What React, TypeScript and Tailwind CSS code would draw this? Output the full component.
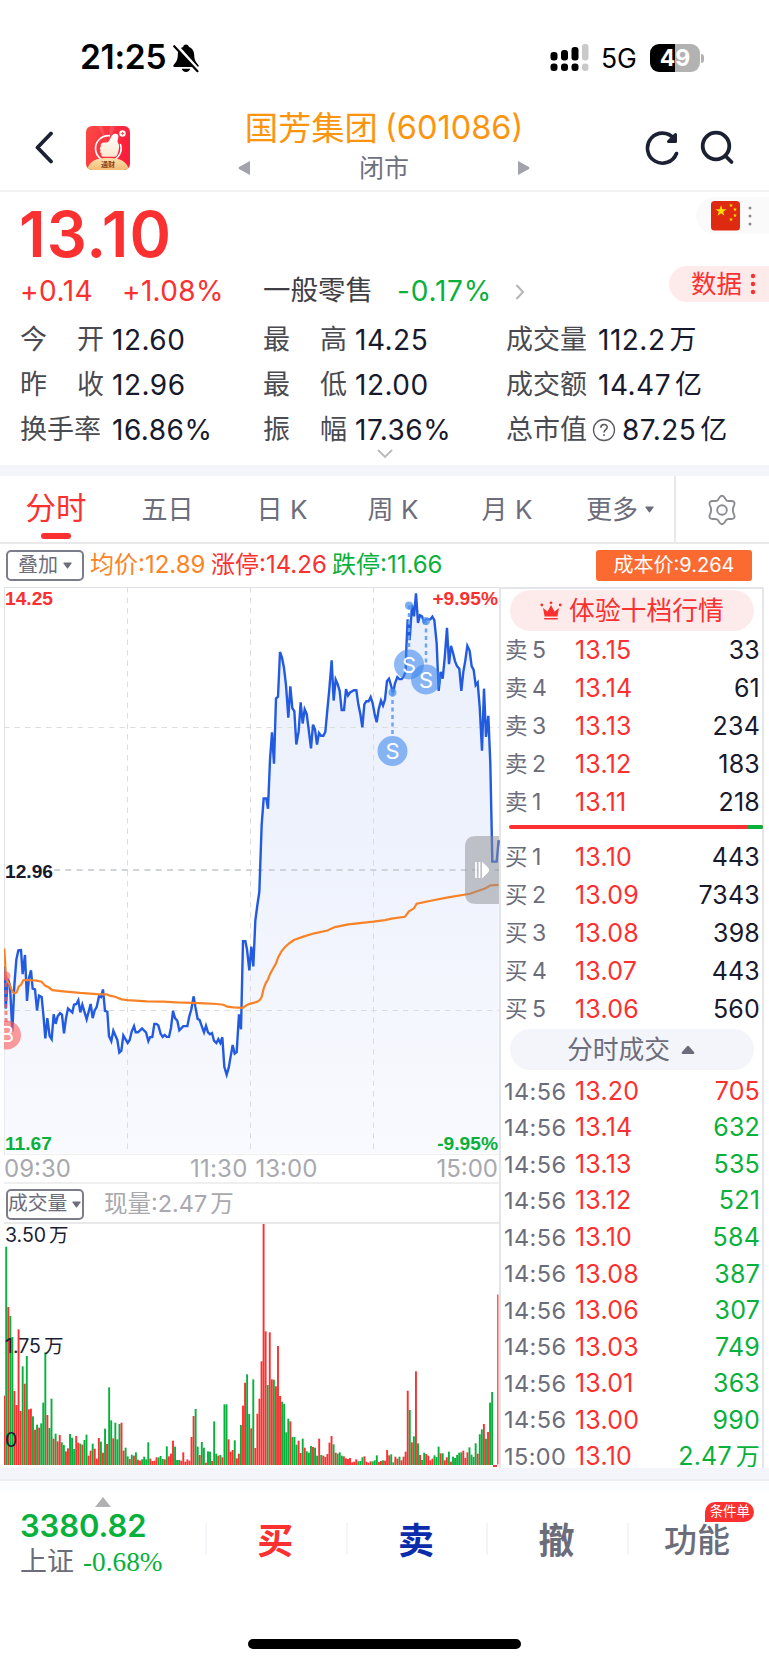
import clsx from 'clsx';

const RED = '#fb3030';
const GREEN = '#08b03c';

// one entry per minute: direction + top of the bar
const VOLUME =
  'r770 g323 r504 g531 g594 r756 r798 r571 r816 g682 r734 g651 r811 r809 g832 r872 g857 r866 g853 g791 g640 r828 g867 g779 r899 g884 r907 r888 g910 g918 r937 r928 g885 g896 g930 r891 r911 g914 r917 g903 g887 r950 r935 g914 r929 r959 r897 g908 r941 g869 r915 g745 g844 r898 g851 g901 g855 r851 r935 g926 g952 r960 g947 r950 g940 r962 r965 g961 g953 g961 g910 r959 r966 r965 r955 g955 g951 g960 r961 g922 r952 r944 r905 g923 g963 g963 r965 r940 r968 r961 r965 r894 r831 g810 g923 r948 g909 g926 r971 g937 g938 r966 g847 g944 r950 g948 r955 g796 g796 r901 r938 r933 g904 r958 r944 g858 r800 r731 g706 g825 r868 g721 r927 r824 r779 r667 r252 r577 g738 r580 r721 g722 r742 r621 r771 g788 g795 g880 g839 r847 g894 g894 g917 r905 r942 g899 r926 g937 g941 g921 r924 g926 g950 r899 g948 r950 r954 r945 r911 r891 g916 r941 g944 g940 g950 r952 r958 r960 r957 r970 r968 r961 g967 g966 g955 r952 r968 r971 r967 g967 g964 g949 r969 r966 g964 r965 r933 r949 g946 g970 r953 r959 g953 r964 r953 r938 r755 g813 r910 g892 r697 g913 r948 g963 g941 r945 r950 r964 r959 g949 g954 g923 r943 g943 r964 r955 g938 r968 g953 g957 g948 g941 g940 r935 r957 r940 g925 g947 g954 g913 r944 g886 g871 r855 g899 r879 g791 g759';

const PRICE =
  '14,1010 17,1120 24,1042 30,1060 37,1180 43,1060 49,992 55,968 63,967 68,1030 75,980 81,1100 87,1040 93,1020 98,1068 105,1070 111,1125 117,1086 125,1090 130,1135 136,1198 142,1145 149,1192 155,1200 161,1135 167,1160 173,1140 180,1132 186,1136 192,1185 198,1145 204,1120 217,1130 222,1110 229,1108 235,1098 241,1130 247,1110 260,1148 272,1108 278,1145 284,1125 290,1116 297,1088 303,1090 309,1070 315,1126 322,1128 327,1192 334,1205 340,1178 352,1202 358,1235 364,1230 370,1190 383,1210 389,1202 395,1180 402,1166 407,1182 414,1182 426,1172 438,1182 445,1205 450,1195 457,1194 463,1160 469,1160 475,1164 482,1186 488,1194 494,1189 500,1194 507,1194 513,1170 519,1126 525,1145 532,1152 538,1177 550,1166 562,1166 568,1140 574,1122 581,1088 586,1115 593,1147 599,1150 605,1165 612,1182 618,1165 624,1182 630,1187 636,1184 642,1204 649,1210 655,1200 661,1210 667,1195 673,1272 680,1293 686,1275 692,1245 698,1215 704,1238 710,1234 717,1135 723,1174 729,944 736,944 741,965 748,1020 754,958 760,1010 766,890 772,850 778,815 785,640 791,571 799,571 804,598 810,470 816,398 822,480 828,310 834,305 840,188 846,203 852,230 858,275 865,360 871,278 877,335 883,343 889,430 896,395 902,320 908,375 914,338 920,350 926,390 933,440 939,378 945,390 951,430 957,400 963,407 970,407 976,397 982,340 988,285 995,210 1001,315 1007,260 1013,272 1019,290 1025,340 1032,340 1038,285 1044,302 1050,294 1062,288 1069,288 1075,325 1081,350 1087,385 1093,325 1099,317 1106,317 1112,306 1118,322 1124,350 1130,372 1136,338 1143,315 1149,328 1155,312 1161,264 1167,258 1173,275 1179,297 1185,270 1192,254 1198,259 1205,259 1211,252 1217,240 1219,180 1223,103 1229,157 1236,65 1242,95 1248,35 1254,112 1260,92 1266,95 1272,110 1278,103 1285,103 1291,103 1297,96 1303,105 1310,165 1316,290 1322,240 1328,258 1334,205 1341,125 1347,220 1353,172 1359,190 1365,212 1371,225 1378,232 1384,290 1390,240 1396,210 1402,172 1409,185 1415,225 1421,235 1427,275 1433,268 1439,330 1446,446 1452,284 1458,410 1465,355 1471,480 1477,736 1490,736 1496,680';

const AVERAGE =
  '13,963 18,1040 24,1050 30,1060 37,1075 43,1080 50,1078 56,1063 63,1058 70,1046 80,1045 95,1046 110,1047 125,1050 135,1060 147,1065 157,1072 190,1075 240,1079 290,1082 320,1083 332,1087 345,1089 365,1096 383,1098 440,1101 490,1102 530,1104 600,1106 650,1108 670,1110 682,1115 700,1117 728,1118 735,1114 745,1109 760,1105 772,1102 778,1099 785,1090 791,1068 798,1052 804,1044 810,1030 820,1014 828,1002 835,985 845,970 855,959 870,948 882,941 910,932 940,924 982,916 1005,907 1045,900 1120,893 1155,889 1175,885 1215,880 1227,866 1242,858 1250,846 1300,837 1340,830 1410,820 1455,806 1472,798 1496,797';

const stats = [
  [
    ['今', '开', '12.60'],
    ['最', '高', '14.25'],
    ['成交量', '', '112.2', '万'],
  ],
  [
    ['昨', '收', '12.96'],
    ['最', '低', '12.00'],
    ['成交额', '', '14.47', '亿'],
  ],
  [
    ['换手率', '', '16.86%'],
    ['振', '幅', '17.36%'],
    ['总市值', '', '87.25', '亿'],
  ],
];

const asks = [
  ['卖', '5', '13.15', '33'],
  ['卖', '4', '13.14', '61'],
  ['卖', '3', '13.13', '234'],
  ['卖', '2', '13.12', '183'],
  ['卖', '1', '13.11', '218'],
];

const bids = [
  ['买', '1', '13.10', '443'],
  ['买', '2', '13.09', '7343'],
  ['买', '3', '13.08', '398'],
  ['买', '4', '13.07', '443'],
  ['买', '5', '13.06', '560'],
];

const trades = [
  ['14:56', '13.20', '705'],
  ['14:56', '13.14', '632'],
  ['14:56', '13.13', '535'],
  ['14:56', '13.12', '521'],
  ['14:56', '13.10', '584'],
  ['14:56', '13.08', '387'],
  ['14:56', '13.06', '307'],
  ['14:56', '13.03', '749'],
  ['14:56', '13.01', '363'],
  ['14:56', '13.00', '990'],
  ['15:00', '13.10', '2.47', '万'],
];

const Caret = ({ className }: { className?: string }) => (
  <svg className={className} width="9" height="7" viewBox="0 0 9 7">
    <path d="M1 .5h7q1 0 .5 1L5 6.3q-.5.5-1 0L.5 1.500Q0 .5 1 .5Z" fill="currentColor" />
  </svg>
);

const StatusBar = () => (
  <div className="flex h-[98px] items-center justify-between pl-[80px] pr-[65px] pt-[18px] text-black">
    <div className="flex items-center">
      <span className="w-[92px] text-[33.500px] font-semibold leading-none tracking-[-0.300px]">21:25</span>
      <svg width="28" height="30" viewBox="0 0 28 30" fill="#000">
        <path d="M14 1.500c-1.600 0-2.700 1-2.900 2.400C7.300 5.200 5.900 8.400 5.800 12c-.1 5-1.600 7.200-4 9.700-1 1.200-.5 2.300.8 2.300h22.800c1.300 0 1.800-1.100.8-2.300-2.400-2.500-3.900-4.700-4-9.700-.1-3.600-1.500-6.800-5.300-8.100C16.700 2.500 15.600 1.500 14 1.500Z" />
        <path d="M9.800 25.800h8.400c-.4 2-2 3.200-4.200 3.200s-3.800-1.200-4.200-3.200Z" />
        <path d="M3.700 2.200 27 28.200" stroke="#fff" strokeWidth="4" />
        <path d="M2.200 3.200 25.500 28.200" stroke="#000" strokeWidth="2.200" strokeLinecap="round" />
      </svg>
    </div>
    <div className="flex items-center">
      <svg width="39" height="28" viewBox="0 0 39 28">
        <rect x="0.500" y="8" width="7" height="8.500" rx="3" />
        <rect x="11" y="6" width="7" height="10.500" rx="3" />
        <rect x="21.500" y="3" width="7" height="13.500" rx="3" />
        <rect x="32" y="0" width="6.500" height="16.500" rx="3" fill="#c9c9c9" />
        <rect x="0.500" y="19.500" width="7" height="7.500" rx="3" />
        <rect x="11" y="19.500" width="7" height="7.500" rx="3" />
        <rect x="21.500" y="19.500" width="7" height="7.500" rx="3" />
        <rect x="32" y="19.500" width="6.500" height="7.500" rx="3" fill="#c9c9c9" />
      </svg>
      <span className="ml-3 w-[37px] text-[26.500px] leading-none tracking-[-0.200px]">5G</span>
      <div className="ml-3 flex h-[28px] w-[50px] items-center justify-center rounded-[9px] bg-[linear-gradient(90deg,#000_50%,#b2b2b2_50%)] text-[23px] font-bold leading-none text-white">
        49
      </div>
      <div className="ml-[1px] h-[9px] w-[3px] rounded-r-full bg-[#b2b2b2]" />
    </div>
  </div>
);

const AppIcon = () => (
  <svg width="44" height="44" viewBox="0 0 44 44">
    <defs>
      <linearGradient id="app-bg" x1="0" y1="0" x2="1" y2="0.300">
        <stop offset="0" stopColor="#fb4a45" />
        <stop offset="1" stopColor="#fa1e3c" />
      </linearGradient>
      <linearGradient id="app-gold" x1="0" y1="0" x2="0" y2="1">
        <stop offset="0" stopColor="#fbe0ad" />
        <stop offset="1" stopColor="#f3bd75" />
      </linearGradient>
      <linearGradient id="app-hand" x1="0" y1="0" x2="0" y2="1">
        <stop offset="0" stopColor="#fff" />
        <stop offset="1" stopColor="#ffe6cf" />
      </linearGradient>
      <clipPath id="app-clip">
        <rect width="44" height="44" rx="6" />
      </clipPath>
    </defs>
    <g clipPath="url(#app-clip)">
      <rect width="44" height="44" fill="url(#app-bg)" />
      <path d="M22 20 12 0h4Zm0 0L24 0h5Z" fill="#fff" opacity=".12" />
      <path d="M24 9.800A12.800 12.800 0 1 0 34.300 18" stroke="#fff" strokeWidth="1.600" fill="none" />
      <path
        d="M26.500 9c1.800-2 5.700-1.700 5.900 1.200.1 2-1 3.600-.9 5.300.2 1.600 1.700 2.600 1.600 5.200-.1 2.300-.6 4.500-1.500 7.300-.6 2-2 2.800-4 2.800H18c-2.500 0-3.300-1.800-2.500-3-1.600-1-1.700-2.600-.8-3.600-1.200-1.200-1-3 .2-3.800-.7-2.400.9-4.200 3.200-4h3.200c2.700-1.600 3.200-5.200 5.200-7.400Z"
        fill="url(#app-hand)"
      />
      <circle cx="36.500" cy="7.500" r="3.200" fill="#fff" />
      <path d="M36.500 5.800v3.400M34.800 7.500h3.400" stroke="#fb3b42" strokeWidth=".8" />
      <path d="M1 44c2-7 6-12 21-12s19 5 21 12Z" fill="url(#app-gold)" />
      <text x="22" y="41" textAnchor="middle" fontSize="7" fontWeight="700" fill="#8a431c" fontFamily="Noto Sans CJK SC">
        通财
      </text>
    </g>
  </svg>
);

const Header = () => (
  <header className="flex h-[94px] justify-between border-b-2 border-[#f3f3f4]">
    <div className="flex w-[238px] items-start pl-[34px] pt-[28px]">
      <svg className="mt-[5px]" width="20" height="33" viewBox="0 0 20 33" fill="none">
        <path d="M17 2.500 3.500 16.500 17 30.500" stroke="#1b2033" strokeWidth="3.800" strokeLinecap="round" strokeLinejoin="round" />
      </svg>
      <div className="ml-[32px]">
        <AppIcon />
      </div>
    </div>
    <div className="flex w-[292px] flex-col items-center pt-[10px]">
      <div className="flex items-center whitespace-nowrap text-[#fb950f]">
        <span className="text-[33.300px] leading-[40px]">国芳集团</span>
        <span className="ml-[7px] text-[32.500px] leading-[40px]">(601086)</span>
      </div>
      <div className="flex w-full items-center justify-between pt-[1px] text-[#a2a3ad]">
        <svg width="12" height="14" viewBox="0 0 12 14">
          <path d="M12 0v14L1 8q-1-1 0-2Z" fill="currentColor" />
        </svg>
        <span className="text-[25px] leading-[38px] text-[#6f7080]">闭市</span>
        <svg width="12" height="14" viewBox="0 0 12 14">
          <path d="M0 0v14l11-6q1-1 0-2Z" fill="currentColor" />
        </svg>
      </div>
    </div>
    <div className="flex w-[239px] items-start justify-end pr-[33px] pt-[32px]">
      <svg width="36" height="36" viewBox="0 0 36 36" fill="none" stroke="#1b2033" strokeWidth="3.600" strokeLinecap="round" strokeLinejoin="round">
        <path d="M32.500 23.500A15 15 0 1 1 30 8.500" />
        <path d="M31.500 4.500v7H24.500Z" fill="#1b2033" strokeWidth="3" />
      </svg>
      <svg className="ml-5" width="36" height="36" viewBox="0 0 36 36" fill="none" stroke="#1b2033" strokeWidth="3.800" strokeLinecap="round">
        <circle cx="16" cy="16" r="13.300" />
        <path d="m26 26.500 5.500 5.500" />
      </svg>
    </div>
  </header>
);

const star = 'M0-5 1.180-1.620 4.750-1.540 1.900.62 2.940 4.050 0 2 -2.940 4.050-1.900.62-4.750-1.540-1.180-1.620Z';

const Quote = () => (
  <section className="h-[273px]">
    <div className="flex h-[78px] items-start justify-between">
      <div className="pl-[19px] pt-[10px] text-[63px] font-semibold leading-[64px] tracking-[1px] text-[#fb3030]">13.10</div>
      <div className="mt-[5px] flex h-[37px] w-[73px] items-center rounded-l-full bg-[#fafafa] pl-[15px]">
        <svg width="29" height="30" viewBox="0 0 29 30" fill="#fede00">
          <rect width="29" height="29.500" rx="3.500" fill="#de2a10" />
          <path transform="translate(10 10) scale(1.150)" d={star} />
          <path transform="translate(20 4.500) scale(.42)" d={star} />
          <path transform="translate(24 8.500) scale(.42)" d={star} />
          <path transform="translate(24 14.500) scale(.42)" d={star} />
          <path transform="translate(20 18.500) scale(.42)" d={star} />
        </svg>
        <svg className="ml-[8px]" width="4" height="22" fill="#8c8c8c">
          <circle cx="2" cy="3" r="1.500" />
          <circle cx="2" cy="11" r="1.500" />
          <circle cx="2" cy="19" r="1.500" />
        </svg>
      </div>
    </div>

    <div className="flex h-[47px] items-center whitespace-nowrap pb-[5px] pl-[20px] text-[28px] leading-none text-[#fb3030]">
      <span className="flex items-center">
        <span className="w-[102px] tracking-[0.500px]">+0.14</span>
        <span className="w-[141px] tracking-[0.350px]">+1.08%</span>
        <span className="w-[134px] text-[27.500px] text-[#3f4046]">一般零售</span>
        <span className="w-[118px] tracking-[0.800px] text-[#08b03c]">-0.17%</span>
        <svg className="mt-[2px]" width="10" height="16" viewBox="0 0 10 16" fill="none" stroke="#b5b5b8" strokeWidth="2">
          <path d="m1.500 1 6.500 7-6.500 7" />
        </svg>
      </span>
      <div className="mb-[15px] ml-auto flex h-[36px] w-[100px] items-center rounded-l-full bg-[#fdeaea] pl-[22px] text-[25.500px]">
        数据
        <svg className="ml-[8px]" width="6" height="22" fill="#fb3030">
          <circle cx="3" cy="3" r="2.200" />
          <circle cx="3" cy="11" r="2.200" />
          <circle cx="3" cy="19" r="2.200" />
        </svg>
      </div>
    </div>

    <div className="flex flex-col pl-[20px]">
      {stats.map((row, r) => (
        <div key={r} className="flex h-[45px]">
          {row.map(([label, tail, value, unit]) => (
            <div key={label + tail} className="flex w-[243px] items-center whitespace-nowrap text-[27px] leading-none text-[#17192c]">
              <span className="flex w-[84px] justify-between text-[#4a4b50]">
                <span>{label}</span>
                {tail && <span>{tail}</span>}
              </span>
              {label === '总市值' && (
                <svg className="ml-[2px] mr-[-2px]" width="24" height="24" viewBox="0 0 24 24" fill="none" stroke="#5a5b60" strokeWidth="1.300">
                  <circle cx="12" cy="12" r="10.500" />
                  <path d="M8.800 9.800c0-4.300 6.400-4.300 6.400-.6 0 2.400-3.200 2.500-3.200 5.300M12 16.300v1.700" strokeWidth="1.600" />
                </svg>
              )}
              <span className="ml-[8px] text-[28px] tracking-[0.500px]">{value}</span>
              {unit && <span className="ml-[4px]">{unit}</span>}
            </div>
          ))}
        </div>
      ))}
    </div>
    <svg className="mx-auto mt-[-3px]" width="16" height="10" viewBox="0 0 16 10" fill="none" stroke="#b9b9bd" strokeWidth="1.800">
      <path d="m1 1 7 7 7-7" />
    </svg>
  </section>
);

const Tabs = () => (
  <nav className="flex h-[68px] border-b-2 border-[#e9e9ea] text-[26px] leading-none text-[#6c6d7b]">
    <div className="flex w-[112px] flex-col items-center pt-[17px] text-[30.500px] text-[#fb3030]">
      <span>分时</span>
      <span className="mt-[9px] h-[6px] w-[30px] rounded-full bg-[#fb3030]" />
    </div>
    <div className="flex flex-1 items-center pt-[1px]">
      <span className="w-[111px] text-center">五日</span>
      <span className="w-[118px] text-center">日 K</span>
      <span className="w-[104px] text-center">周 K</span>
      <span className="w-[124px] text-center">月 K</span>
      <span className="ml-[17px] flex items-center">
        更多
        <Caret className="ml-[7px]" />
      </span>
    </div>
    <div className="flex w-[95px] items-center justify-center border-l-2 border-[#e9e9ea] pr-[1px] pt-[1px]">
      <svg width="30" height="32" viewBox="0 0 30 32" fill="none" stroke="#8b8c92" strokeWidth="1.900" strokeLinejoin="round">
        <path d="M12.500 3.500q2.500-3.500 5 0l1.500 2.300q1 1.200 2.500 1.200h2.700q4.300 0 3 4l-1 2.600q-.6 2.400 0 4.800l1 2.600q1.300 4-3 4h-2.700q-1.500 0-2.500 1.200l-1.500 2.300q-2.500 3.500-5 0L11 26.200Q10 25 8.500 25H5.800q-4.300 0-3-4l1-2.600q.6-2.400 0-4.800l-1-2.600q-1.300-4 3-4h2.700Q10 7 11 5.800Z" />
        <circle cx="15" cy="16" r="4.800" />
      </svg>
    </div>
  </nav>
);

const Legend = () => (
  <div className="flex h-[43px] items-center whitespace-nowrap pb-[1px] pl-[6px] pr-[17px] text-[24px] leading-none">
    <div className="flex h-[31px] w-[78px] items-center justify-center rounded-[5px] border-2 border-[#7c7d8b] text-[20px] text-[#6c6d7b]">
      叠加
      <Caret className="ml-[5px]" />
    </div>
    <span className="ml-[6px] w-[121px] text-[#fb8425]">均价:12.89</span>
    <span className="w-[121px] text-[#fb3030]">涨停:14.26</span>
    <span className="text-[#08b03c]">跌停:11.66</span>
    <span className="ml-auto flex h-[31px] w-[156px] items-center justify-center rounded-[3px] bg-[#fb6a31] text-[20px] text-white">成本价:9.264</span>
  </div>
);

type MarkerProps = { x: number; y: number; dot: number };

const Marker = ({ x, y, dot }: MarkerProps) => (
  <g>
    <path d={`M${x} ${dot}V${y - 14}`} stroke="#6da5ef" strokeWidth="2.500" strokeDasharray="4 3.500" />
    <circle cx={x} cy={dot} r="4" fill="#4f94ee" fillOpacity=".75" />
    <circle cx={x} cy={y} r="15" fill="#3c86ec" fillOpacity=".58" />
    <text x={x} y={y + 8} textAnchor="middle" fontSize="22" fill="#fff">
      S
    </text>
  </g>
);

const PriceChart = () => (
  <div className="relative h-[567px]">
    <svg className="block" width="497" height="567" viewBox="4 587 497 567">
      <defs>
        <linearGradient id="area" x1="0" y1="0" x2="0" y2="1">
          <stop offset="0" stopColor="#eaf0fc" />
          <stop offset="0.500" stopColor="#eff3fd" />
          <stop offset="1" stopColor="#f9fafe" />
        </linearGradient>
      </defs>
      <g transform="translate(0 580) scale(.33333 .38265)">
        <path d={`M14,1498L${PRICE}L1496,1498Z`} fill="url(#area)" />
      </g>
      <g stroke="#dcdde0" strokeWidth="1" strokeDasharray="5.500 5">
        <path d="M127.500 587v566M250.500 587v566M373.500 587v566M4 727.500h495M4 1010.500h495" />
        <path d="M54 870h445" stroke="#d0d3d9" strokeWidth="2" strokeDasharray="6 5.300" />
      </g>
      <g transform="translate(0 580) scale(.33333 .38265)" fill="none" strokeLinejoin="miter">
        <polyline points={PRICE} stroke="#225ae0" strokeWidth="2.400" vectorEffect="non-scaling-stroke" />
        <polyline points={AVERAGE} stroke="#f98226" strokeWidth="2.200" vectorEffect="non-scaling-stroke" />
      </g>
      <Marker x={409} y={664.500} dot={605.500} />
      <Marker x={426} y={679.500} dot={621} />
      <Marker x={392.500} y={751} dot={692.500} />
      <path d="M6 976V1022" stroke="#fb5a5a" strokeOpacity=".7" strokeWidth="3" strokeDasharray="4 3" />
      <circle cx="6" cy="976" r="4.500" fill="#fb5a5a" fillOpacity=".6" />
      <circle cx="6.500" cy="1035" r="14.500" fill="#fb5a5a" fillOpacity=".6" />
      <text x="7" y="1042" textAnchor="middle" fontSize="21" fill="#fff">
        B
      </text>
      <path d="M499 836h-23q-11 0-11 11v46q0 11 11 11h23Z" fill="#8d8e93" fillOpacity=".5" />
      <path d="M476 862v16M479.500 862v16" stroke="#fff" strokeWidth="1.700" />
      <path d="M482 861.500v17l6.500-6.500q1.500-2 0-4Z" fill="#fff" />
    </svg>
    <div className="absolute inset-0 flex flex-col justify-between px-[1px] pb-[1px] pt-[3px] font-['Liberation_Sans'] text-[19.200px] font-bold leading-[18px]">
      <div className="flex justify-between text-[#fb3030]">
        <span>14.25</span>
        <span>+9.95%</span>
      </div>
      <div className="text-[#17192c]">12.96</div>
      <div className="flex justify-between text-[#08b03c]">
        <span>11.67</span>
        <span>-9.95%</span>
      </div>
    </div>
  </div>
);

const VolumeChart = () => (
  <div className="relative h-[245px] border-t-2 border-[#e9e9ea]">
    <svg className="block" width="497" height="244" viewBox="4 1225 497 244">
      {VOLUME.split(' ').map((bar, i) => {
        const top = 1140 + Number(bar.slice(1)) / 3;
        return <rect key={i} x={3.200 + i * 2.059} y={top} width="1.900" height={1466 - top} fill={bar[0] === 'r' ? RED : GREEN} />;
      })}
      <path d="M497.800 1295.500v170" stroke={RED} strokeWidth="1.200" />
      <path d="M493 1467h4" stroke={RED} strokeWidth="2" />
    </svg>
    <div className="absolute left-[1px] top-0 flex flex-col text-[19.500px] leading-[22px] text-[#1b1d33]">
      <span>
        3.50<span className="ml-[3px]">万</span>
      </span>
      <span className="mt-[89px]">
        1.75<span className="ml-[3px]">万</span>
      </span>
      <span className="mt-[72px]">0</span>
    </div>
  </div>
);

const OrderRow = ({ row }: { row: string[] }) => (
  <div className="flex h-[38px] items-center pl-[4px] pr-[2px] text-[25px] leading-none tracking-[0.200px]">
    <span className="w-[27px] text-[22.500px] text-[#6c6d7b]">{row[0]}</span>
    <span className="w-[43px] text-[23px] text-[#6c6d7b]">{row[1]}</span>
    <span className="text-[#fb3030]">{row[2]}</span>
    <span className="ml-auto text-[#17192c]">{row[3]}</span>
  </div>
);

const OrderBook = () => (
  <aside className="h-[881px] w-[263px] border-r-2 border-t-2 border-[#e4e5e9]">
    <div className="ml-[9px] mt-[1px] flex h-[41px] w-[244px] items-center justify-center rounded-full bg-[#fdebeb] text-[25.800px] leading-none text-[#fb3030]">
      <svg className="mr-[7px]" width="22" height="20" viewBox="0 0 22 20" fill="#fb3030">
        <path d="m3 7 4.500 3.500L11 4l3.500 6.500L19 7l-1.600 8.500H4.600Z" />
        <rect x="4" y="17" width="14" height="1.600" rx=".8" />
        <circle cx="1.800" cy="4" r="1.400" />
        <circle cx="11" cy="1.800" r="1.400" />
        <circle cx="20.200" cy="4" r="1.400" />
      </svg>
      体验十档行情
    </div>
    {asks.map(row => (
      <OrderRow key={row[1]} row={row} />
    ))}
    <div className="mb-[9px] ml-[8px] mt-[4px] flex h-[4px] w-[254px] overflow-hidden rounded-full bg-[#fb3030]">
      <span className="ml-auto w-[16px] rounded-l-full bg-[#08b03c]" />
    </div>
    {bids.map(row => (
      <OrderRow key={row[1]} row={row} />
    ))}
    <div className="mb-[3px] ml-[9px] mt-[1px] flex h-[41px] w-[244px] items-center justify-center rounded-full bg-[#f4f5fa] pr-[2px] text-[25.800px] leading-none text-[#6c6d7b]">
      分时成交
      <svg className="ml-[11px]" width="14" height="10" viewBox="0 0 14 10">
        <path d="M1 7 6 1.200q1-1 2 0L13 7q1 2-1 2H2Q0 9 1 7Z" fill="currentColor" />
      </svg>
    </div>
    {trades.map(([time, price, amount, unit], i) => (
      <div key={i} className="flex h-[36.550px] items-center pl-[3px] pr-[2px] text-[25px] leading-none tracking-[0.200px] text-[#fb3030]">
        <span className="w-[71px] text-[23.500px] tracking-[0.400px] text-[#6c6d7b]">{time}</span>
        <span>{price}</span>
        <span className={clsx('ml-auto', i > 0 && 'text-[#08b03c]')}>
          {amount}
          {unit && <span className="ml-[4px] text-[24px]">{unit}</span>}
        </span>
      </div>
    ))}
  </aside>
);

const BottomBar = () => (
  <footer className="flex h-[95px] whitespace-nowrap leading-none">
    <div className="w-[205px] pl-[20px]">
      <svg className="ml-[75px] mt-[5px]" width="16" height="10" viewBox="0 0 16 10">
        <path d="M8 0 16 10H0Z" fill="#b1b1b3" />
      </svg>
      <div className="mt-[2px] text-[31px] font-semibold leading-[34px] tracking-[-0.100px] text-[#08b03c]">3380.82</div>
      <div className="mt-[3px] flex items-center text-[27px] leading-[32px] text-[#6c6d7b]">
        上证
        <span className="ml-[9px] font-['Liberation_Serif'] text-[27.300px] text-[#08b03c]">-0.68%</span>
      </div>
    </div>
    {[
      ['买', 'text-[#fb3030] text-[36px] font-bold'],
      ['卖', 'text-[#0a2cab] text-[36px] font-bold'],
      ['撤', 'text-[#6c6d7b] text-[36px] font-bold'],
      ['功能', 'text-[#6c6d7b] text-[33px] font-medium'],
    ].map(([name, style]) => (
      <div key={name} className="relative flex h-[95px] w-[140.600px] items-center justify-center pt-[2px]">
        <span className="absolute left-0 top-[31px] h-[32px] w-[2px] bg-[#f4f5f9]" />
        <span className={style}>{name}</span>
        {name === '功能' && (
          <span className="absolute right-[13px] top-[10px] flex h-[20px] w-[49px] items-center justify-center rounded-[10px] rounded-bl-none bg-[#fb3030] text-[13.500px] text-white">
            条件单
          </span>
        )}
      </div>
    ))}
  </footer>
);

const App = () => (
  <div className="h-[1665px] w-[769px] overflow-hidden bg-white font-[Inter,'Noto_Sans_CJK_SC',sans-serif]">
    <StatusBar />
    <Header />
    <Quote />
    <div className="h-[11px] bg-[#f4f5fa]" />
    <Tabs />
    <Legend />
    <main className="flex h-[881px] pl-[4px]">
      <div className="w-[497px] border-r-2 border-[#e4e5e9]">
        <div className="h-[567px] shadow-[inset_1px_1px_0_#dfe3e8]">
          <PriceChart />
        </div>
        <div className="flex h-[30px] items-center border-b-2 border-t border-[#efeff0] pr-[1px] text-[24px] leading-none text-[#a8a8ae]">
          <span>09:30</span>
          <span className="ml-auto tracking-[0.200px]">11:30</span>
          <span className="ml-[8px] mr-auto">13:00</span>
          <span>15:00</span>
        </div>
        <div className="flex h-[38px] items-center pl-[2px] pt-[2px] leading-none">
          <div className="flex h-[31px] w-[78px] items-center whitespace-nowrap rounded-[5px] border-2 border-[#7c7d8b] text-[19.800px] text-[#6c6d7b]">
            成交量
            <Caret className="ml-[5px]" />
          </div>
          <span className="ml-[20px] text-[23.500px] text-[#a8a8ae]">
            现量:2.47<span className="ml-[3px]">万</span>
          </span>
        </div>
        <VolumeChart />
      </div>
      <OrderBook />
    </main>
    <div className="h-[13px] border-b-2 border-[#eeeff3] bg-[#f4f5fa]" />
    <div className="h-[11px] bg-[#fcfdff]" />
    <BottomBar />
    <div className="mx-auto mt-[52px] h-[10px] w-[273px] rounded-full bg-black" />
  </div>
);

export default App;
